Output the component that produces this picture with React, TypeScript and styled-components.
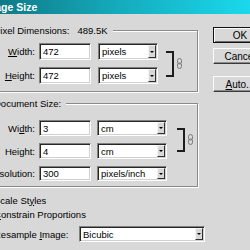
import React from 'react';
import styled, { createGlobalStyle } from 'styled-components';

const GlobalStyle = createGlobalStyle`
    html, body {
        margin: 0;
        padding: 0;
        overflow: hidden;
        background: #d8d8d8;
    }
    body {
        font-family: "Liberation Sans", Arial, sans-serif;
        font-size: 9.5px;
        color: #000;
    }
`;

const FACE = '#d8d8d8';

const Dialog = styled.div`
    width: 250px;
    height: 250px;
    overflow: hidden;
    background: ${FACE};
    display: flex;
    flex-direction: column;
`;

const TitleBar = styled.div`
    height: 14px;
    flex-shrink: 0;
    display: flex;
    align-items: center;
    overflow: hidden;
    background: linear-gradient(90deg, #0e7a88 0%, #14a9ba 45%, #1bd8ec 100%);
`;

const TitleText = styled.span`
    margin-left: -17px;
    font-size: 10.5px;
    font-weight: bold;
    color: #fff;
    white-space: nowrap;
    line-height: 14px;
`;

const Body = styled.div`
    display: flex;
    flex: 1;
`;

const LeftCol = styled.div`
    margin-left: -30px;
    width: 228px;
    flex-shrink: 0;
    display: flex;
    flex-direction: column;
`;

const RightCol = styled.div`
    margin-left: 15px;
    padding-top: 13px;
    flex-shrink: 0;
    display: flex;
    flex-direction: column;
`;

const Group = styled.div<{ $top: number; $bottom: number }>`
    margin: ${p => p.$top}px 0 0 22px;
    width: 206px;
    box-sizing: border-box;
    border: 1px solid #8a8a8a;
    box-shadow: inset 1px 1px 0 #fff, 1px 1px 0 #fff;
    padding-bottom: ${p => p.$bottom}px;
    display: flex;
    flex-direction: column;
`;

const Legend = styled.div<{ $gap: number }>`
    margin: -7px 0 ${p => p.$gap}px 1px;
    height: 13px;
    line-height: 13px;
    align-self: flex-start;
    padding-right: 5px;
    background: ${FACE};
    white-space: nowrap;
`;

const LegendValue = styled.span`
    margin-left: 8px;
`;

const LinkedRows = styled.div`
    display: flex;
    align-items: center;
`;

const RowStack = styled.div`
    display: flex;
    flex-direction: column;
    gap: 7px;
`;

const Row = styled.div<{ $h: number; $mt?: number }>`
    display: flex;
    align-items: center;
    height: ${p => p.$h}px;
    margin-top: ${p => p.$mt || 0}px;
`;

const Label = styled.label`
    width: 42px;
    padding-right: 4px;
    flex-shrink: 0;
    display: flex;
    justify-content: flex-end;
    white-space: nowrap;
`;

const U = styled.span`
    text-decoration: underline;
`;

const Field = styled.div<{ $w: number }>`
    width: ${p => p.$w}px;
    height: 100%;
    flex-shrink: 0;
    box-sizing: border-box;
    background: #fff;
    border: 1px solid;
    border-color: #808080 #fff #fff #808080;
    box-shadow: inset 1px 1px 0 #262626, inset -1px -1px 0 #d0d0d0;
    padding-left: 3px;
    display: flex;
    align-items: center;
    white-space: nowrap;
`;

const SelectBox = styled(Field)<{ $ml?: number }>`
    margin-left: ${p => p.$ml ?? 7}px;
    padding-right: 1px;
    justify-content: space-between;
`;

const ArrowBtn = styled.span`
    width: 8px;
    height: calc(100% - 2px);
    box-sizing: border-box;
    background: ${FACE};
    border: 1px solid;
    border-color: #f4f4f4 #303030 #303030 #f4f4f4;
    display: flex;
    align-items: center;
    justify-content: center;
    &::after {
        content: '';
        border-left: 2px solid transparent;
        border-right: 2px solid transparent;
        border-top: 2px solid #000;
    }
`;

const BracketWrap = styled.div<{ $ml: number }>`
    margin-left: ${p => p.$ml}px;
    display: flex;
    align-items: center;
    gap: 3px;
`;

const Bracket = styled.div<{ $h: number }>`
    width: 8px;
    height: ${p => p.$h}px;
    box-sizing: border-box;
    border: 2px solid #1c1c1c;
    border-left: none;
`;

const CheckRow = styled.div<{ $mt?: number }>`
    display: flex;
    align-items: center;
    height: 14px;
    margin-top: ${p => p.$mt || 0}px;
    padding-left: 5px;
    gap: 6px;
    white-space: nowrap;
`;

const CheckBox = styled.span`
    width: 13px;
    height: 13px;
    flex-shrink: 0;
    box-sizing: border-box;
    background: #fff;
    border: 1px solid;
    border-color: #808080 #fff #fff #808080;
`;

const ResampleRow = styled(CheckRow)`
    height: 16px;
`;

const ResampleLabel = styled.span`
    width: 79px;
    flex-shrink: 0;
`;

const Button = styled.div<{ $mt?: number; $default?: boolean }>`
    width: 54px;
    height: 16px;
    margin-top: ${p => p.$mt || 0}px;
    box-sizing: border-box;
    background: ${FACE};
    border: 1px solid;
    border-color: ${p => (p.$default ? '#111' : '#fbfbfb #3a3a3a #3a3a3a #fbfbfb')};
    box-shadow: ${p =>
        p.$default
            ? 'inset 1px 1px 0 #fbfbfb, inset -1px -1px 0 #6c6c6c'
            : 'inset -1px -1px 0 #8a8a8a'};
    display: flex;
    align-items: center;
    justify-content: center;
    font-size: 10px;
    white-space: nowrap;
`;

const LinkIcon = () => (
    <svg width="5" height="11" viewBox="0 0 5 11">
        <rect x="0.5" y="0.5" width="4" height="5.5" rx="2" fill="none" stroke="#7a7a7a" />
        <rect x="0.5" y="5" width="4" height="5.5" rx="2" fill="none" stroke="#7a7a7a" />
    </svg>
);

const Select: React.FC<{ w: number; ml?: number; children: React.ReactNode }> = ({ w, ml, children }) => (
    <SelectBox $w={w} $ml={ml}>
        <span>{children}</span>
        <ArrowBtn />
    </SelectBox>
);

export default function App() {
    return (
        <Dialog>
            <GlobalStyle />
            <TitleBar>
                <TitleText>Image Size</TitleText>
            </TitleBar>
            <Body>
                <LeftCol>
                    <Group $top={16} $bottom={7}>
                        <Legend $gap={6}>
                            Pixel Dimensions:<LegendValue>489.5K</LegendValue>
                        </Legend>
                        <LinkedRows>
                            <RowStack>
                                <Row $h={17}>
                                    <Label><span><U>W</U>idth:</span></Label>
                                    <Field $w={52}>472</Field>
                                    <Select w={60}>pixels</Select>
                                </Row>
                                <Row $h={17}>
                                    <Label><span><U>H</U>eight:</span></Label>
                                    <Field $w={52}>472</Field>
                                    <Select w={60}>pixels</Select>
                                </Row>
                            </RowStack>
                            <BracketWrap $ml={8}>
                                <Bracket $h={26} />
                                <LinkIcon />
                            </BracketWrap>
                        </LinkedRows>
                    </Group>

                    <Group $top={11} $bottom={5}>
                        <Legend $gap={10}>Document Size:</Legend>
                        <LinkedRows>
                            <RowStack>
                                <Row $h={16}>
                                    <Label><span>Wi<U>d</U>th:</span></Label>
                                    <Field $w={52}>3</Field>
                                    <Select w={70} ml={6}>cm</Select>
                                </Row>
                                <Row $h={16}>
                                    <Label><span>Hei<U>g</U>ht:</span></Label>
                                    <Field $w={52}>4</Field>
                                    <Select w={70} ml={6}>cm</Select>
                                </Row>
                            </RowStack>
                            <BracketWrap $ml={10}>
                                <Bracket $h={24} />
                                <LinkIcon />
                            </BracketWrap>
                        </LinkedRows>
                        <Row $h={15} $mt={7}>
                            <Label><span><U>R</U>esolution:</span></Label>
                            <Field $w={52}>300</Field>
                            <Select w={70} ml={6}>pixels/inch</Select>
                        </Row>
                    </Group>

                    <CheckRow $mt={6}>
                        <CheckBox />
                        <span>Scale St<U>y</U>les</span>
                    </CheckRow>
                    <CheckRow>
                        <CheckBox />
                        <span><U>C</U>onstrain Proportions</span>
                    </CheckRow>
                    <ResampleRow $mt={5}>
                        <CheckBox />
                        <ResampleLabel>Resample <U>I</U>mage:</ResampleLabel>
                        <Select w={126} ml={0}>Bicubic</Select>
                    </ResampleRow>
                </LeftCol>

                <RightCol>
                    <Button $default>OK</Button>
                    <Button $mt={5}>Cancel</Button>
                    <Button $mt={12}><span><U>A</U>uto...</span></Button>
                </RightCol>
            </Body>
        </Dialog>
    );
}
